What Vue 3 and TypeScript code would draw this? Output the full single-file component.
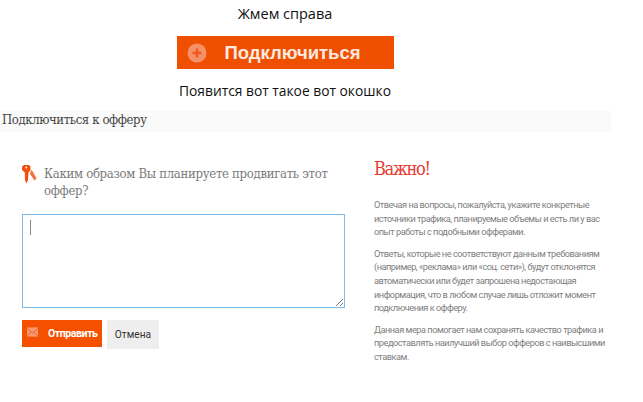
<script setup lang="ts">
const paragraphs: string[][] = [
  ['Отвечая на вопросы, пожалуйста, укажите конкретные', 'источники трафика, планируемые объемы и есть ли у вас', 'опыт работы с подобными офферами.'],
  ['Ответы, которые не соответствуют данным требованиям', '(например, «реклама» или «соц. сети»), будут отклонятся', 'автоматически или будет запрошена недостающая', 'информация, что в любом случае лишь отложит момент', 'подключения к офферу.'],
  ['Данная мера помогает нам сохранять качество трафика и', 'предоставлять наилучший выбор офферов с наивысшими', 'ставкам.'],
]
</script>

<template>
  <div class="page">
    <div class="top">
      <p class="cap first">Жмем справа</p>
      <div class="connect">
        <svg class="plus" width="20" height="20" viewBox="0 0 20 20">
          <circle cx="10" cy="10" r="9.5" fill="#f59167" />
          <path d="M10 5.5v9M5.5 10h9" stroke="#ee5a22" stroke-width="2.4" />
        </svg>
        <span class="connect-label">Подключиться</span>
      </div>
      <p class="cap second">Появится вот такое вот окошко</p>
    </div>
    <div class="band">Подключиться к офферу</div>
    <div class="columns">
      <div class="left">
        <div class="question">
          <svg class="key" width="15" height="19" viewBox="0 0 15 19">
            <path d="M0 1.5 2 0 7 0 8.5 1.5 8.5 5 6.5 7.5 6 15 4.5 18.5 3 15 2.8 7.5 0 5Z" fill="#f2500f" />
            <path d="M9 5 10.5 6 14.5 13.5 12.5 15.5 8 9Z" fill="#f5703a" />
            <circle cx="4.2" cy="2.4" r="1" fill="#fff" />
          </svg>
          <span>Каким образом Вы планируете продвигать этот оффер?</span>
        </div>
        <div class="area"><i class="caret"></i>
          <svg class="grip" width="9" height="9" viewBox="0 0 9 9">
            <path d="M1 8 8 1M5 8 8 5" stroke="#777" stroke-width="1" />
          </svg>
        </div>
        <div class="actions">
          <div class="send">
            <svg width="11" height="10" viewBox="0 0 12 10">
              <rect width="12" height="10" fill="#f9986f" />
              <path d="M0 1 6 6 12 1M0 10 4.5 5M12 10 7.5 5" stroke="#ea5a1f" stroke-width="0.8" fill="none" />
            </svg>
            <span>Отправить</span>
          </div>
          <div class="cancel">Отмена</div>
        </div>
      </div>
      <div class="right">
        <div class="important">Важно!</div>
        <p v-for="(lines, i) in paragraphs" :key="i" class="note">
          <span v-for="line in lines" :key="line" class="line">{{ line }}</span>
        </p>
      </div>
    </div>
  </div>
</template>

<style>
html, body { margin: 0; background: #fff; }
</style>

<style scoped>
.page { width: 643px; height: 402px; overflow: hidden; background: #fff; }
.top { width: 570px; display: flex; flex-direction: column; align-items: center; }
.cap { margin: 0; font: 13.8px/18px "Open Sans", sans-serif; color: #111; white-space: nowrap; }
.first { margin-top: 5px; font-size: 14.5px; }
.connect {
  margin-top: 13px; width: 217px; height: 33px; box-sizing: border-box; padding-left: 10px;
  display: flex; align-items: center; background: #ef5000;
}
.plus { flex: none; }
.connect-label { margin-left: 18px; font: bold 18.5px "Liberation Sans", sans-serif; color: #fde9e0; white-space: nowrap; }
.second { margin-top: 13px; }
.band {
  margin-top: 11px; width: 611px; height: 21px; box-sizing: border-box; padding-left: 2px;
  background: #fafafa; font: 13px/18px "DejaVu Serif Condensed", "DejaVu Serif", serif; letter-spacing: -0.4px; color: #444; white-space: nowrap;
}
.columns { display: flex; padding: 0 0 0 22px; }
.left { width: 323px; flex: none; padding-top: 33px; }
.question { display: flex; gap: 7px; height: 49px; font: 13px/17px "DejaVu Serif Condensed", "DejaVu Serif", serif; letter-spacing: -0.3px; color: #7b7b7b; }
.key { flex: none; }
.question span { width: 295px; }
.area {
  position: relative; height: 94px; box-sizing: border-box; border: 1px solid #79bdef; background: #fff;
}
.caret { position: absolute; left: 7px; top: 5px; width: 1px; height: 15px; background: #888; }
.grip { position: absolute; right: 0; bottom: 0; }
.actions { display: flex; gap: 5px; margin-top: 12px; align-items: flex-start; }
.send {
  width: 80px; height: 27px; box-sizing: border-box; padding-left: 5px; display: flex; align-items: center; gap: 10px;
  background: #f55000; color: #fff; font: 700 10.5px "Roboto", sans-serif; letter-spacing: -0.4px; white-space: nowrap;
}
.send svg { flex: none; margin-top: -3px; }
.cancel {
  width: 52px; height: 29px; display: flex; align-items: center; justify-content: center;
  background: #eee; color: #333; font: 10.2px "Roboto", sans-serif;
}
.right { margin-left: 29px; padding-top: 24px; }
.important { font: 18px/26px "DejaVu Serif Condensed", "DejaVu Serif", serif; letter-spacing: -1.3px; color: #e93a32; }
.note { margin: 0 0 8px; font: 9.2px/13.6px "Roboto", sans-serif; letter-spacing: -0.47px; color: #808080; }
.note:first-of-type { margin-top: 16px; }
.line { display: block; white-space: nowrap; }
</style>
